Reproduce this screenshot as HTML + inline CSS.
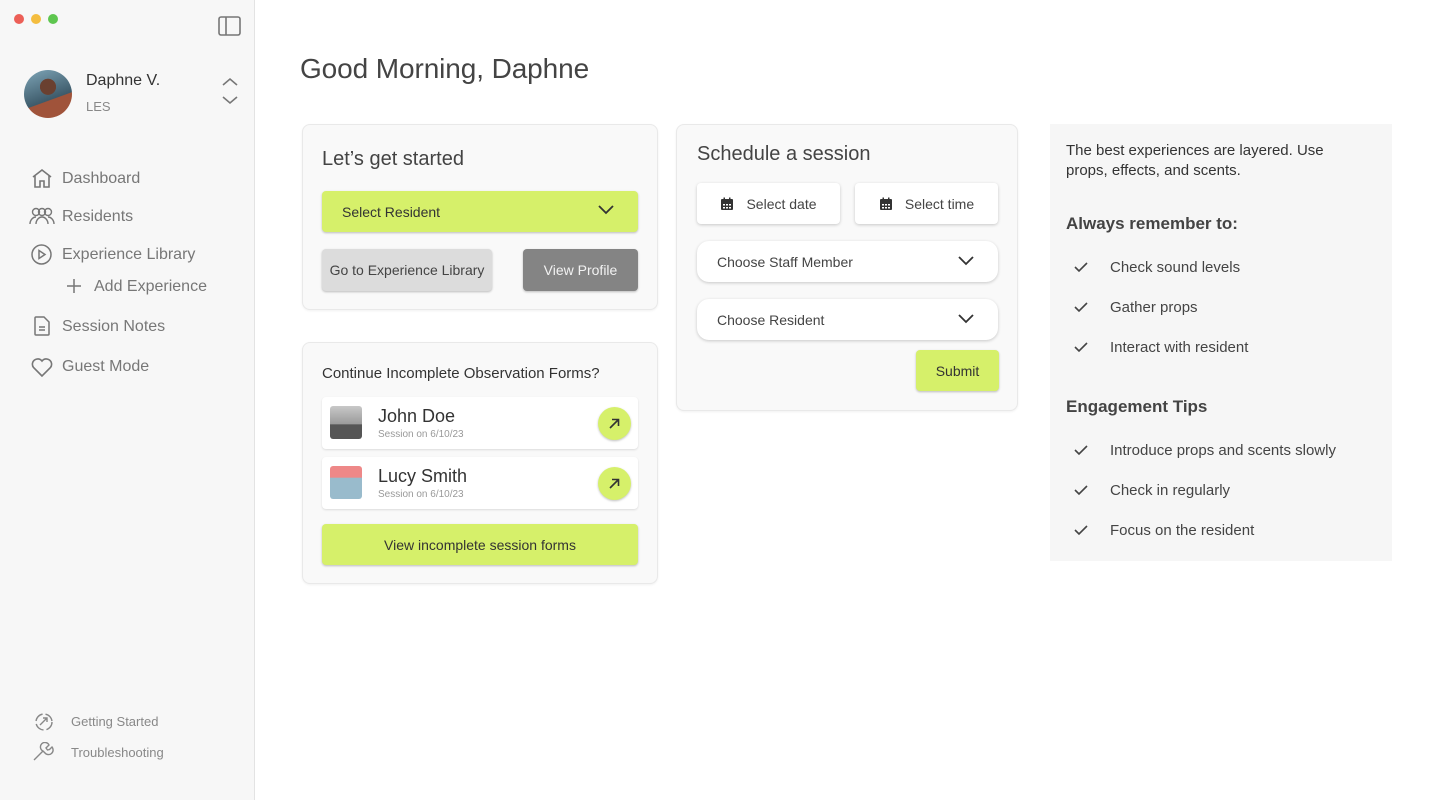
<!DOCTYPE html>
<html><head><meta charset="utf-8"><style>
*{box-sizing:border-box;margin:0;padding:0}
body{width:1440px;height:800px;background:#fff;font-family:"Liberation Sans",sans-serif;color:#444;position:relative;overflow:hidden}
.abs{position:absolute}
.side{left:0;top:0;width:255px;height:800px;background:#f7f7f7;border-right:1px solid #e3e3e3}
.dot{width:10px;height:10px;border-radius:50%;top:14px}
.nav{font-size:16px;color:#777}
.card{background:#f9f9f9;border:1px solid #e9e9e9;border-radius:8px;box-shadow:0 1px 2px rgba(0,0,0,.06)}
.btn{display:flex;align-items:center;justify-content:center;border-radius:4px;font-size:14px;box-shadow:0 1px 2px rgba(0,0,0,.25)}
.lime{background:#d6f06a;color:#333}
.white{background:#fff;color:#444;box-shadow:0 1px 3px rgba(0,0,0,.2)}
.chk{font-size:15px;color:#444}
</style></head><body>
<div class="abs side">
  <div class="abs dot" style="left:14px;background:#ec5f57"></div>
  <div class="abs dot" style="left:31px;background:#f4bd3f"></div>
  <div class="abs dot" style="left:48px;background:#5ec64f"></div>
  <svg class="abs" style="left:218px;top:16px" width="23" height="20" viewBox="0 0 23 20"><rect x="1" y="1" width="21" height="18" rx="2" fill="none" stroke="#777" stroke-width="1.6"/><line x1="8" y1="1" x2="8" y2="19" stroke="#777" stroke-width="1.6"/></svg>
  <div class="abs" style="left:24px;top:70px;width:48px;height:48px;border-radius:50%;background:radial-gradient(circle at 50% 35%,#6a4030 0 20%,transparent 21%),linear-gradient(160deg,#7fa6b8,#3d5a6a 60%,#a0533a 61%)"></div>
  <div class="abs" style="left:86px;top:72px;font-size:16px;color:#333">Daphne V.</div>
  <div class="abs" style="left:86px;top:99px;font-size:13px;color:#888">LES</div>
  <svg class="abs" style="left:221px;top:77px" width="18" height="28" viewBox="0 0 18 28"><path d="M2 8l7-6 7 6M2 20l7 6 7-6" fill="none" stroke="#777" stroke-width="1.6"/></svg>
  <svg class="abs" style="left:31px;top:168px" width="22" height="20" viewBox="0 0 22 20"><path d="M2 9L11 2l9 7M4 8v11h5v-6h4v6h5V8" fill="none" stroke="#777" stroke-width="1.6"/></svg>
  <div class="abs nav" style="left:62px;top:170px">Dashboard</div>
  <svg class="abs" style="left:29px;top:206px" width="26" height="20" viewBox="0 0 26 20"><circle cx="7" cy="6" r="3.5" fill="none" stroke="#777" stroke-width="1.4"/><circle cx="13" cy="6" r="3.5" fill="none" stroke="#777" stroke-width="1.4"/><circle cx="19" cy="6" r="3.5" fill="none" stroke="#777" stroke-width="1.4"/><path d="M1 18c0-4 3-7 6-7M7 18c0-4 3-7 6-7s6 3 6 7M19 11c3 0 6 3 6 7" fill="none" stroke="#777" stroke-width="1.4"/></svg>
  <div class="abs nav" style="left:62px;top:208px">Residents</div>
  <svg class="abs" style="left:31px;top:244px" width="21" height="21" viewBox="0 0 21 21"><circle cx="10.5" cy="10.5" r="9.5" fill="none" stroke="#777" stroke-width="1.5"/><path d="M8 6.5v8l6-4z" fill="none" stroke="#777" stroke-width="1.5"/></svg>
  <div class="abs nav" style="left:62px;top:246px">Experience Library</div>
  <svg class="abs" style="left:66px;top:278px" width="16" height="16" viewBox="0 0 16 16"><path d="M8 1v14M1 8h14" stroke="#777" stroke-width="1.5"/></svg>
  <div class="abs nav" style="left:94px;top:278px">Add Experience</div>
  <svg class="abs" style="left:34px;top:316px" width="16" height="20" viewBox="0 0 16 20"><path d="M1 2a1 1 0 011-1h8l5 5v12a1 1 0 01-1 1H2a1 1 0 01-1-1z" fill="none" stroke="#777" stroke-width="1.5"/><path d="M5 11h6M5 14h6" stroke="#777" stroke-width="1.5"/></svg>
  <div class="abs nav" style="left:62px;top:318px">Session Notes</div>
  <svg class="abs" style="left:31px;top:358px" width="22" height="19" viewBox="0 0 22 19"><path d="M11 18L2.5 9.5A5 5 0 0111 3a5 5 0 018.5 6.5z" fill="none" stroke="#777" stroke-width="1.6"/></svg>
  <div class="abs nav" style="left:62px;top:358px">Guest Mode</div>
  <svg class="abs" style="left:34px;top:712px" width="20" height="20" viewBox="0 0 20 20"><circle cx="10" cy="10" r="8" fill="none" stroke="#888" stroke-width="1.4" stroke-dasharray="10 3"/><path d="M6 13l7-7M9 6h4v4" fill="none" stroke="#888" stroke-width="1.4"/></svg>
  <div class="abs" style="left:71px;top:714px;font-size:13px;color:#888">Getting Started</div>
  <svg class="abs" style="left:32px;top:742px" width="22" height="20" viewBox="0 0 22 20"><path d="M2 18l9-9M11 9a4.5 4.5 0 116 -6l-3 3 1.5 2 2-0.5 2.5-2.5A4.5 4.5 0 0113 11z" fill="none" stroke="#888" stroke-width="1.4"/></svg>
  <div class="abs" style="left:71px;top:745px;font-size:13px;color:#888">Troubleshooting</div>
</div>

<div class="abs" style="left:300px;top:53px;font-size:28px;color:#444;letter-spacing:-0.1px">Good Morning, Daphne</div>

<div class="abs card" style="left:302px;top:124px;width:356px;height:186px">
  <div class="abs" style="left:19px;top:23px;font-size:20px;color:#444">Let’s get started</div>
  <div class="abs btn lime" style="left:19px;top:66px;width:316px;height:41px;justify-content:flex-start;padding-left:20px">Select Resident
    <svg class="abs" style="right:24px;top:14px" width="16" height="10" viewBox="0 0 16 10"><path d="M1 1l7 7 7-7" fill="none" stroke="#333" stroke-width="1.8"/></svg></div>
  <div class="abs btn" style="left:19px;top:124px;width:170px;height:42px;background:#dcdcdc;color:#444">Go to Experience Library</div>
  <div class="abs btn" style="left:220px;top:124px;width:115px;height:42px;background:#848484;color:#f2f2f2">View Profile</div>
</div>

<div class="abs card" style="left:302px;top:342px;width:356px;height:242px">
  <div class="abs" style="left:19px;top:22px;font-size:15px;color:#333">Continue Incomplete Observation Forms?</div>
  <div class="abs" style="left:19px;top:54px;width:316px;height:52px;background:#fff;border-radius:4px;box-shadow:0 1px 2px rgba(0,0,0,.12)">
    <div class="abs" style="left:8px;top:9px;width:32px;height:33px;border-radius:3px;background:linear-gradient(#c8c8c8,#9a9a9a 55%,#555 56%)"></div>
    <div class="abs" style="left:56px;top:9px;font-size:18px;color:#333">John Doe</div>
    <div class="abs" style="left:56px;top:32px;font-size:10px;color:#999">Session on 6/10/23</div>
    <div class="abs lime" style="left:276px;top:10px;width:33px;height:33px;border-radius:50%;box-shadow:0 1px 2px rgba(0,0,0,.25)"><svg class="abs" style="left:10px;top:10px" width="13" height="13" viewBox="0 0 13 13"><path d="M2 11l8-8M4 2.5h6.5V9" fill="none" stroke="#333" stroke-width="1.6"/></svg></div>
  </div>
  <div class="abs" style="left:19px;top:114px;width:316px;height:52px;background:#fff;border-radius:4px;box-shadow:0 1px 2px rgba(0,0,0,.12)">
    <div class="abs" style="left:8px;top:9px;width:32px;height:33px;border-radius:3px;background:linear-gradient(#e88 0 35%,#9bc 36%)"></div>
    <div class="abs" style="left:56px;top:9px;font-size:18px;color:#333">Lucy Smith</div>
    <div class="abs" style="left:56px;top:32px;font-size:10px;color:#999">Session on 6/10/23</div>
    <div class="abs lime" style="left:276px;top:10px;width:33px;height:33px;border-radius:50%;box-shadow:0 1px 2px rgba(0,0,0,.25)"><svg class="abs" style="left:10px;top:10px" width="13" height="13" viewBox="0 0 13 13"><path d="M2 11l8-8M4 2.5h6.5V9" fill="none" stroke="#333" stroke-width="1.6"/></svg></div>
  </div>
  <div class="abs btn lime" style="left:19px;top:181px;width:316px;height:41px">View incomplete session forms</div>
</div>

<div class="abs card" style="left:676px;top:124px;width:342px;height:287px">
  <div class="abs" style="left:20px;top:18px;font-size:20px;color:#444">Schedule a session</div>
  <div class="abs btn white" style="left:20px;top:58px;width:143px;height:41px"><svg width="14" height="14" viewBox="0 0 14 14" style="margin-right:12px"><rect x="1" y="2" width="12" height="11" rx="1" fill="#333"/><g fill="#fff"><rect x="3" y="7" width="2" height="1.5"/><rect x="6" y="7" width="2" height="1.5"/><rect x="9" y="7" width="2" height="1.5"/><rect x="3" y="10" width="2" height="1.5"/><rect x="6" y="10" width="2" height="1.5"/><rect x="9" y="10" width="2" height="1.5"/></g><rect x="3.5" y="0.5" width="1.5" height="3" fill="#333"/><rect x="9" y="0.5" width="1.5" height="3" fill="#333"/></svg>Select date</div>
  <div class="abs btn white" style="left:178px;top:58px;width:143px;height:41px"><svg width="14" height="14" viewBox="0 0 14 14" style="margin-right:12px"><rect x="1" y="2" width="12" height="11" rx="1" fill="#333"/><g fill="#fff"><rect x="3" y="7" width="2" height="1.5"/><rect x="6" y="7" width="2" height="1.5"/><rect x="9" y="7" width="2" height="1.5"/><rect x="3" y="10" width="2" height="1.5"/><rect x="6" y="10" width="2" height="1.5"/><rect x="9" y="10" width="2" height="1.5"/></g><rect x="3.5" y="0.5" width="1.5" height="3" fill="#333"/><rect x="9" y="0.5" width="1.5" height="3" fill="#333"/></svg>Select time</div>
  <div class="abs btn white" style="left:20px;top:116px;width:301px;height:41px;border-radius:12px;justify-content:flex-start;padding-left:20px">Choose Staff Member<svg class="abs" style="right:24px;top:15px" width="16" height="10" viewBox="0 0 16 10"><path d="M1 1l7 7 7-7" fill="none" stroke="#333" stroke-width="1.8"/></svg></div>
  <div class="abs btn white" style="left:20px;top:174px;width:301px;height:41px;border-radius:12px;justify-content:flex-start;padding-left:20px">Choose Resident<svg class="abs" style="right:24px;top:15px" width="16" height="10" viewBox="0 0 16 10"><path d="M1 1l7 7 7-7" fill="none" stroke="#333" stroke-width="1.8"/></svg></div>
  <div class="abs btn lime" style="left:239px;top:225px;width:83px;height:41px">Submit</div>
</div>

<div class="abs" style="left:1050px;top:124px;width:342px;height:437px;background:#f6f6f6">
  <div class="abs" style="left:16px;top:17px;width:300px;font-size:15px;line-height:20px;color:#333">The best experiences are layered. Use props, effects, and scents.</div>
  <div class="abs" style="left:16px;top:90px;font-size:17px;font-weight:bold;color:#444">Always remember to:</div>
  <div class="abs" style="left:16px;top:273px;font-size:17px;font-weight:bold;color:#444">Engagement Tips</div>
</div>
<svg class="abs" style="left:1074px;top:261px" width="16" height="300" viewBox="0 0 16 300">
<g fill="none" stroke="#444" stroke-width="1.6"><path d="M1 6l4 4 8-8"/><path d="M1 46l4 4 8-8"/><path d="M1 86l4 4 8-8"/><path d="M1 189l4 4 8-8"/><path d="M1 229l4 4 8-8"/><path d="M1 269l4 4 8-8"/></g></svg>
<div class="abs chk" style="left:1110px;top:259px">Check sound levels</div>
<div class="abs chk" style="left:1110px;top:299px">Gather props</div>
<div class="abs chk" style="left:1110px;top:339px">Interact with resident</div>
<div class="abs chk" style="left:1110px;top:442px">Introduce props and scents slowly</div>
<div class="abs chk" style="left:1110px;top:482px">Check in regularly</div>
<div class="abs chk" style="left:1110px;top:522px">Focus on the resident</div>
</body></html>
